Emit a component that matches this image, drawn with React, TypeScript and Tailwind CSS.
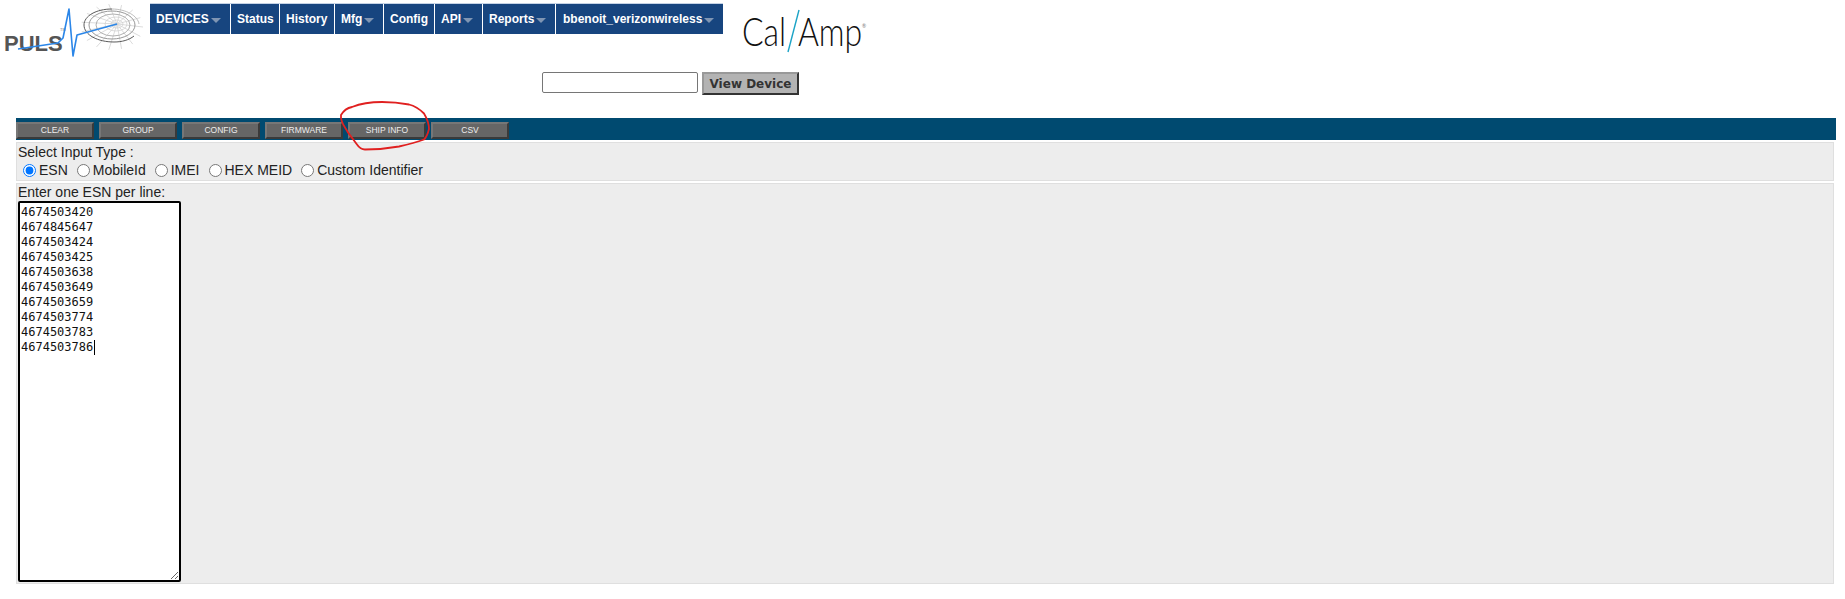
const navItems = [
  { label: "DEVICES", caret: true, className: "w-[80px] pl-[6px]" },
  { label: "Status", className: "w-[48px] pl-[6px]" },
  { label: "History", className: "w-[54px] pl-[6px]" },
  { label: "Mfg", caret: true, className: "w-[48px] pl-[6px]" },
  { label: "Config", className: "w-[50px] pl-[6px]" },
  { label: "API", caret: true, className: "w-[47px] pl-[6px]" },
  { label: "Reports", caret: true, className: "w-[72px] pl-[6px]" },
  { label: "bbenoit_verizonwireless", caret: true, className: "w-[167px] pl-[7px]" },
]

const actions = ["CLEAR", "GROUP", "CONFIG", "FIRMWARE", "SHIP INFO", "CSV"]
const inputTypes = ["ESN", "MobileId", "IMEI", "HEX MEID", "Custom Identifier"]
const esns = [
  "4674503420",
  "4674845647",
  "4674503424",
  "4674503425",
  "4674503638",
  "4674503649",
  "4674503659",
  "4674503774",
  "4674503783",
  "4674503786",
]

function PulsLogo() {
  const spokes = [0, 24, 48, 72, 96, 120, 144, 168, 192, 216, 240, 264, 288, 312, 336]
  return (
    <svg width="150" height="62" viewBox="0 0 150 62" className="shrink-0">
      <g stroke="#d2d2d2" strokeWidth="0.8" fill="none">
        {spokes.map((a) => (
          <line
            key={a}
            x1="117"
            y1="24"
            x2={112 + Math.cos((a * Math.PI) / 180) * 31}
            y2={27 + Math.sin((a * Math.PI) / 180) * 23}
          />
        ))}
        <ellipse cx="117" cy="24" rx="6" ry="4" />
        <ellipse cx="116" cy="24" rx="11" ry="7" />
      </g>
      <g fill="none">
        <ellipse cx="113" cy="25" rx="17" ry="11" stroke="#a8a8a8" strokeWidth="0.9" />
        <ellipse cx="112" cy="25" rx="23" ry="14" stroke="#8c8c8c" strokeWidth="0.9" />
        <path d="M112 9C96 9 84 16 84 25c0 10 14 17 30 17 8 0 15-2 20-6" stroke="#5b5b5b" strokeWidth="1" />
        <path d="M112 9c14 0 26 7 27 15" stroke="#b5b5b5" strokeWidth="0.9" />
      </g>
      <text x="4" y="51" fontFamily="'Liberation Sans', Arial, sans-serif" fontWeight="700" fontSize="22" fill="#555555">
        PULS
      </text>
      <text x="60" y="31" fontFamily="'Liberation Sans', Arial, sans-serif" fontSize="4" fill="#777777">
        TM
      </text>
      <path
        d="M18 49 58 43 63 38 69 9 73 56 77 35 117 24"
        fill="none"
        stroke="#2b86e8"
        strokeWidth="1.6"
        strokeLinejoin="round"
      />
    </svg>
  )
}

function CalAmpLogo() {
  return (
    <div className="flex items-center h-[44px] mt-[9px] ml-[19px] font-['Lato',sans-serif] font-light text-[39px] leading-none text-[#111]">
      <span className="inline-block w-[44px] origin-left scale-x-[0.82]">Cal</span>
      <svg width="14" height="44" viewBox="0 0 14 44" className="shrink-0">
        <line x1="13" y1="1" x2="2" y2="43" stroke="#1ba3c6" strokeWidth="1.4" />
      </svg>
      <span className="inline-block w-[64px] ml-[-2px] origin-left scale-x-[0.82]">Amp</span>
      <span className="text-[5px] self-start mt-[15px] font-normal text-[#777]">®</span>
    </div>
  )
}

export default function App() {
  return (
    <div className="w-[1845px] h-[599px] bg-white font-['Liberation_Sans',Arial,sans-serif] text-[14px] text-[#222] overflow-hidden relative">
      <div className="flex items-start h-[62px]">
        <PulsLogo />
        <ul className="flex gap-[1px] mt-[3px] bg-white border-t border-[#c5d3e6]">
          {navItems.map((item) => (
            <li
              key={item.label}
              className={`flex items-center gap-[2px] h-[30px] bg-[#17457f] text-white text-[12px] font-bold ${item.className}`}
            >
              {item.label}
              {item.caret && (
                <span className="w-0 h-0 border-x-[5px] border-x-transparent border-t-[5px] border-t-[#7f95b3] mt-[2px]" />
              )}
            </li>
          ))}
        </ul>
        <CalAmpLogo />
      </div>

      <div className="flex items-start gap-[4px] ml-[542px] mt-[10px] h-[46px]">
        <input className="w-[156px] h-[21px] bg-white border border-[#767676] rounded-[2px]" />
        <button className="w-[97px] h-[23px] bg-[#b3b3b3] border-2 border-[#333] border-t-[#999] border-l-[#999] font-['DejaVu_Sans',sans-serif] text-[12px] font-bold text-[#333]">
          View Device
        </button>
      </div>

      <div className="flex gap-[5px] items-center h-[22px] mx-[16px] w-[1820px] bg-[#004a70] pt-[2px]">
        {actions.map((action) => (
          <button
            key={action}
            className="w-[78px] h-[17px] pt-[1px] bg-[#666666] border-2 border-[#3a3a3a] border-t-[#777] border-l-[#777] text-[8.5px] leading-none text-[#eeeeee]"
          >
            {action}
          </button>
        ))}
      </div>

      <div className="mx-[16px] w-[1818px] h-[39px] mt-[2px] bg-[#ededed] border border-[#dfdfdf] pl-[1px] pt-[1px] leading-[16px]">
        <div>Select Input Type :</div>
        <div className="flex items-center gap-[5px] h-[20px] pl-[1px]">
          {inputTypes.map((type, i) => (
            <label key={type} className="flex items-center">
              <input type="radio" name="inputType" defaultChecked={i === 0} className="mt-[3px] mr-[3px] mb-[3px] ml-[4px]" />
              {type}
            </label>
          ))}
        </div>
      </div>

      <div className="mx-[16px] w-[1818px] h-[401px] mt-[2px] bg-[#ededed] border border-[#dfdfdf] pl-[1px] leading-[17px]">
        <div>Enter one ESN per line:</div>
        <div className="relative w-[163px] h-[381px]">
          <textarea
            readOnly
            defaultValue={esns.join("\n")}
            className="block w-full h-full bg-white border-2 border-black rounded-[2px] px-[1px] py-[2px] outline-none font-['DejaVu_Sans_Mono',monospace] text-[12px] leading-[15px] text-[#111]"
          />
          <span className="absolute left-[76px] top-[139px] w-px h-[15px] bg-black" />
        </div>
      </div>

      <svg width="100" height="60" viewBox="0 0 100 60" className="absolute left-[335px] top-[95px] pointer-events-none">
        <path
          d="M6 20C9 15 12 13 17 12 27 8 37 7 47 7c10 0 19 1 27 2.500 6 1.500 11 5 15 9 3 5 5 10 5 15.500-1 4-2 8-5 10.500-8 3-16 5-25 7-11 2-23 3-34 3-3 0-6-2-8-5-3-4-6-8-9-12C10 32 5 27 6 20z"
          fill="none"
          stroke="#e02020"
          strokeWidth="1.8"
        />
      </svg>
    </div>
  )
}
